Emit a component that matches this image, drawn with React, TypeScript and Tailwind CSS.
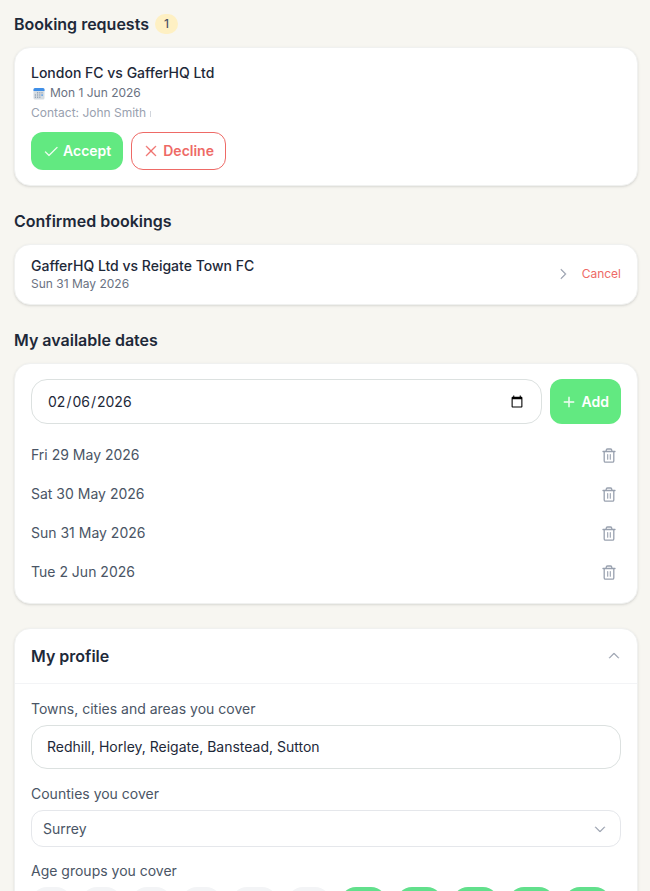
import React, { useState } from 'react';
import { PiCaretDown, PiCaretRight, PiCaretUp, PiCheck, PiPlus, PiX } from 'react-icons/pi';

const DATES = ['Fri 29 May 2026', 'Sat 30 May 2026', 'Sun 31 May 2026', 'Tue 2 Jun 2026'];

const AGE_GROUPS = ['U6', 'U7', 'U8', 'U9', 'U10', 'U11', 'U12', 'U13', 'U14', 'U15', 'U16'];

interface CardProps {
  className?: string;
  children: React.ReactNode;
}

const Card: React.FC<CardProps> = ({ className = '', children }) => (
  <div className={`bg-white border border-[#f0f1f0] rounded-2xl shadow-sm ${className}`}>{children}</div>
);

const CalendarIcon: React.FC = () => (
  <svg viewBox="0 0 12 13" className="w-3 h-[13px]" aria-hidden="true">
    <rect x="0.5" y="1" width="11" height="11.5" rx="1.5" fill="#d5dce2" />
    <path d="M0.5 2.5A1.5 1.5 0 0 1 2 1h8a1.5 1.5 0 0 1 1.5 1.5V4H0.5z" fill="#3f8fe8" />
    <g fill="#8b9caf">
      <rect x="4" y="5.2" width="1.2" height="1.2" />
      <rect x="6.2" y="5.2" width="1.2" height="1.2" />
      <rect x="8.4" y="5.2" width="1.2" height="1.2" />
      <rect x="1.8" y="7.4" width="1.2" height="1.2" />
      <rect x="4" y="7.4" width="1.2" height="1.2" />
      <rect x="6.2" y="7.4" width="1.2" height="1.2" />
      <rect x="1.8" y="9.6" width="1.2" height="1.2" />
      <rect x="4" y="9.6" width="1.2" height="1.2" />
      <rect x="6.2" y="9.6" width="1.2" height="1.2" />
    </g>
    <rect x="8.4" y="7.4" width="1.4" height="1.4" fill="#3f8fe8" />
  </svg>
);

const TrashIcon: React.FC = () => (
  <svg
    viewBox="0 0 18 18"
    className="size-[18px]"
    fill="none"
    stroke="currentColor"
    strokeWidth="1.3"
    strokeLinecap="round"
    strokeLinejoin="round"
    aria-hidden="true"
  >
    <path d="M3 5.5h12" />
    <path d="M6.2 5.3V4.4c0-.8.5-1.4 1.3-1.4h3c.8 0 1.3.6 1.3 1.4v.9" />
    <path d="M4.2 5.7v9.2c0 .8.5 1.3 1.3 1.3h7c.8 0 1.3-.5 1.3-1.3V5.7" />
    <path d="M7.7 8.6v4.6M10.3 8.6v4.6" strokeWidth="1.1" />
  </svg>
);

const App: React.FC = () => {
  const [dates, setDates] = useState(DATES);
  const [ages, setAges] = useState(AGE_GROUPS.slice(6));
  const [open, setOpen] = useState(true);

  const toggleAge = (age: string) =>
    setAges(ages.includes(age) ? ages.filter(a => a !== age) : [...ages, age]);

  return (
    <main className="min-h-screen bg-[#f7f6f1] pl-[14px] pr-3 pt-3 pb-6 font-['Inter',sans-serif] text-sm text-gray-800">
      {/* Requests */}
      <section className="mb-[23px]">
        <div className="flex items-center gap-1.5 mb-[11px]">
          <h2 className="text-base leading-6 font-semibold">Booking requests</h2>
          <span className="rounded-full bg-[#fef0c3] px-[9px] text-xs leading-5 font-medium text-gray-600">1</span>
        </div>
        <Card className="px-4 py-[15px]">
          <h3 className="leading-5 font-medium">London FC vs GafferHQ Ltd</h3>
          <p className="flex items-center gap-[5px] pl-0.5 text-xs leading-5 text-gray-500">
            <CalendarIcon />
            Mon 1 Jun 2026
          </p>
          <p className="text-xs leading-5 text-gray-400">
            Contact: John Smith <span className="inline-block w-px h-1.5 bg-gray-300" />
          </p>
          <div className="flex gap-2 mt-[9px]">
            <button className="h-[38px] px-3 flex items-center gap-1 rounded-xl bg-[#62e981] font-semibold text-white">
              <PiCheck className="size-4 stroke-[6]" />
              Accept
            </button>
            <button className="h-[38px] px-[11px] flex items-center gap-1 rounded-xl border border-[#ee6a66] font-semibold text-[#ee6a66]">
              <PiX className="size-4 stroke-[6]" />
              Decline
            </button>
          </div>
        </Card>
      </section>

      {/* Confirmed */}
      <section className="mb-[23px]">
        <h2 className="mb-[11px] text-base leading-6 font-semibold">Confirmed bookings</h2>
        <Card className="flex items-center justify-between px-4 pt-[11px] pb-3">
          <div>
            <h3 className="leading-5 font-medium">GafferHQ Ltd vs Reigate Town FC</h3>
            <p className="text-xs leading-4 text-gray-500">Sun 31 May 2026</p>
          </div>
          <div className="flex items-center gap-3">
            <PiCaretRight className="size-3.5 stroke-[8] text-gray-400" />
            <button className="text-xs leading-4 text-[#ee6a66]">Cancel</button>
          </div>
        </Card>
      </section>

      {/* Availability */}
      <section className="mb-6">
        <h2 className="mb-[11px] text-base leading-6 font-semibold">My available dates</h2>
        <Card className="px-4 pt-[15px] pb-3">
          <div className="flex gap-2">
            <input
              type="date"
              aria-label="Available date"
              defaultValue="2026-02-06"
              className="h-[45px] min-w-0 flex-1 rounded-2xl border border-[#dce1e0] px-[15px] text-sm"
            />
            <button className="h-[45px] px-3 flex items-center gap-1.5 rounded-xl bg-[#62e981] font-semibold text-white">
              <PiPlus className="size-3.5 stroke-[8]" />
              Add
            </button>
          </div>
          <ul className="mt-[11px]">
            {dates.map(date => (
              <li key={date} className="h-[39px] flex items-center justify-between pr-[3px] text-gray-600">
                {date}
                <button
                  aria-label={`Remove ${date}`}
                  className="text-gray-400"
                  onClick={() => setDates(dates.filter(d => d !== date))}
                >
                  <TrashIcon />
                </button>
              </li>
            ))}
          </ul>
        </Card>
      </section>

      {/* Profile */}
      <Card>
        <button
          aria-expanded={open}
          onClick={() => setOpen(!open)}
          className="w-full h-[55px] px-4 flex items-center justify-between border-b border-gray-100"
        >
          <span className="text-base leading-6 font-semibold">My profile</span>
          <PiCaretUp className="size-3.5 stroke-[8] text-gray-400" />
        </button>
        {open && (
          <div className="px-4 pt-[15px] pb-4 text-gray-600">
            <label htmlFor="towns" className="block mb-1.5 leading-5">
              Towns, cities and areas you cover
            </label>
            <input
              id="towns"
              type="text"
              defaultValue="Redhill, Horley, Reigate, Banstead, Sutton"
              className="w-full h-11 mb-[15px] rounded-2xl border border-[#dce1e0] px-[15px] pb-0.5 text-gray-800"
            />
            <label htmlFor="counties" className="block mb-1.5 leading-5">
              Counties you cover
            </label>
            <div className="grid items-center mb-[14px]">
              <select
                id="counties"
                className="col-start-1 row-start-1 h-[37px] appearance-none rounded-xl border border-gray-200 px-[11px]"
              >
                <option>Surrey</option>
              </select>
              <PiCaretDown className="col-start-1 row-start-1 justify-self-end mr-[14px] size-3.5 stroke-[8] text-gray-400 pointer-events-none" />
            </div>
            <p className="mb-1.5 leading-5">Age groups you cover</p>
            <div className="flex flex-wrap gap-[9px]">
              {AGE_GROUPS.map(age => (
                <button
                  key={age}
                  aria-pressed={ages.includes(age)}
                  onClick={() => toggleAge(age)}
                  className={`h-8 rounded-full px-[11px] font-medium ${
                    ages.includes(age) ? 'bg-[#62e08c] text-white' : 'bg-gray-100 text-gray-600'
                  }`}
                >
                  {age}
                </button>
              ))}
            </div>
          </div>
        )}
      </Card>
    </main>
  );
};

export default App;
